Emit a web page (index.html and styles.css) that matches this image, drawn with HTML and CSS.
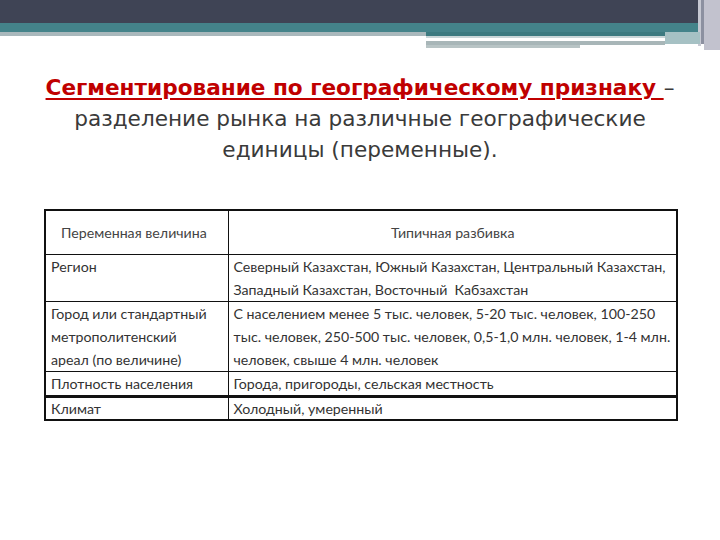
FILE: index.html
```html
<!DOCTYPE html>
<html lang="ru">
<head>
<meta charset="utf-8">
<title>Сегментирование</title>
<link rel="stylesheet" href="styles.css">
</head>
<body>
<header class="deco">
  <div class="dark"></div>
  <div class="teal"></div>
  <div class="rules">
    <div class="rule-left"></div>
    <div class="rule-right">
      <div class="r-teal"></div>
      <div class="r-light"></div>
      <div class="r-white"></div>
      <div class="r-grey1"></div>
      <div class="r-grey2"></div>
    </div>
  </div>
  <div class="edge"><span class="e1"></span><span class="e2"></span><span class="e3"></span></div>
</header>
<main>
  <p class="title"><span class="term">Сегментирование по географическому признаку </span> –<br>разделение рынка на различные географические<br>единицы (переменные).</p>
  <table class="grid">
    <colgroup><col class="c1"><col class="c2"></colgroup>
    <tr class="head"><td class="h1">Переменная величина</td><td class="h2">Типичная разбивка</td></tr>
    <tr><td>Регион</td><td>Северный Казахстан, Южный Казахстан, Центральный Казахстан,<br>Западный Казахстан, Восточный &nbsp;Кабзахстан</td></tr>
    <tr><td>Город или стандартный<br>метрополитенский<br>ареал (по величине)</td><td>С населением менее 5 тыс. человек, 5-20 тыс. человек, 100-250<br>тыс. человек, 250-500 тыс. человек, 0,5-1,0 млн. человек, 1-4 млн.<br>человек, свыше 4 млн. человек</td></tr>
    <tr class="thickb"><td>Плотность населения</td><td>Города, пригороды, сельская местность</td></tr>
    <tr class="last"><td>Климат</td><td>Холодный, умеренный</td></tr>
  </table>
</main>
</body>
</html>
```
FILE: styles.css
```css
html, body { margin: 0; padding: 0; background: #fff; }
body { width: 720px; height: 540px; overflow: hidden; position: relative; font-family: "DejaVu Sans", sans-serif; }

.deco { display: flex; flex-direction: column; height: 48px; }
.dark { height: 23px; background: #3f4455; }
.teal { height: 9px; background: #44838a; }
.rules { display: flex; height: 16px; }
.rule-left { width: 426px; height: 4px; background: #a9b8bc; }
.rule-right { flex: 1; display: flex; flex-direction: column; }
.r-teal { height: 4px; background: #3c7a80; }
.r-light { height: 2px; background: #c9d6d8; }
.r-white { height: 3px; background: #fff; }
.r-grey1 { height: 4px; width: 239px; background: #a8b6b8; }
.r-grey2 { height: 3px; width: 154px; background: #b8c4c5; }
.edge { position: absolute; top: 0; right: 0; height: 48px; width: 55px; display: flex; }
.edge::before { content: ""; position: absolute; left: 0; top: 32px; width: 35px; height: 12px; background: #a6c1c4; }
.e1 { margin-left: 33px; width: 3px; background: #c6c8d2; height: 46px; }
.e2 { width: 3px; background: #8c90a0; height: 44px; }
.e3 { flex: 1; background: #c2c2ce; height: 50px; }

.title { margin: 24px 0 0 0; text-align: center; font-size: 21.6px; line-height: 31px; color: #3a3a3a; }
.term { color: #c00000; font-weight: bold; text-decoration: underline; text-decoration-thickness: 2px; text-underline-offset: 3px; }

.grid { margin: 44px 0 0 44px; width: 634px; border-collapse: collapse; border: 2px solid #111; font-family: "Lato", sans-serif; font-size: 14.2px; line-height: 23px; color: #333; }
.c1 { width: 183px; }
.grid td { border: 1px solid #111; padding: 0 4px 0 5px; vertical-align: top; white-space: nowrap; }
.grid tr.head td { height: 43px; vertical-align: middle; color: #444; }
.grid td.h1 { padding-left: 15px; }
.grid td.h2 { text-align: center; }
.grid tr.thickb td { border-bottom: 3px solid #111; }
.grid tr.last td { line-height: 21px; }
```
